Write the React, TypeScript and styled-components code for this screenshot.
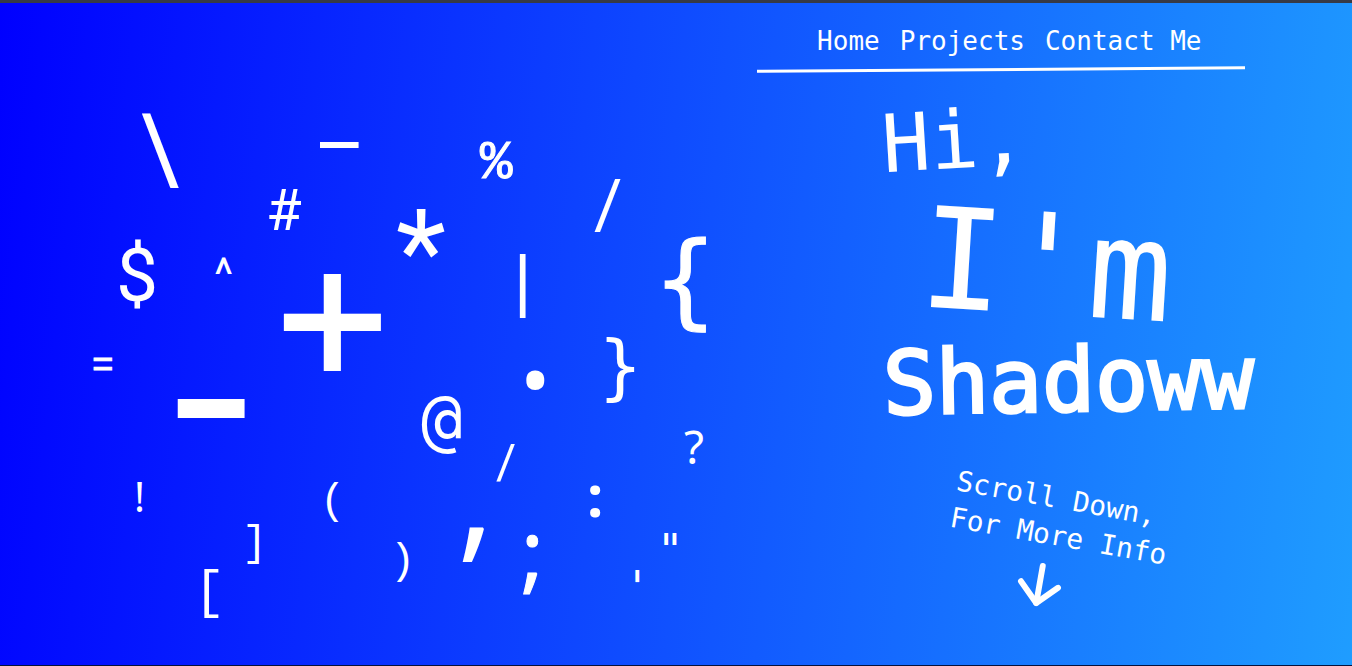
import React from 'react';
import styled, { createGlobalStyle } from 'styled-components';

const mono = '"DejaVu Sans Mono", monospace';
const courier = '"Liberation Mono", monospace';
const roboto = 'Roboto, sans-serif';
const noto = '"Noto Sans", sans-serif';

const GlobalStyle = createGlobalStyle`
  *, *::before, *::after { box-sizing: border-box; }
  body {
    margin: 0;
    color: #fff;
    font-family: ${mono};
    background: #0000ff;
  }
`;

const Page = styled.div`
  display: grid;
  grid-template-columns: 56% 1fr;
  min-height: 100vh;
  border-top: 3px solid #373a45;
  border-bottom: 1px solid #06123c;
  background: linear-gradient(96deg, #0000ff 0%, #1f9dff 100%) padding-box;
  overflow: hidden;
`;

const SymbolCanvas = styled.section`
  position: relative;
  min-height: 640px;
`;

const Glyph = styled.span<{ $x: number; $y: number; $size: number; $font: string; $bold?: boolean; $stroke?: number }>`
  position: absolute;
  left: ${p => p.$x}px;
  top: ${p => p.$y}px;
  font-family: ${p => p.$font};
  font-size: ${p => p.$size}px;
  font-weight: ${p => (p.$bold ? 700 : 400)};
  line-height: 1;
  -webkit-text-stroke: ${p => p.$stroke ?? 0}px #fff;
`;

const Intro = styled.main`
  display: flex;
  flex-direction: column;
  align-items: flex-start;
  padding-top: 23px;
`;

const Nav = styled.nav`
  display: flex;
  gap: 20px;
  padding-left: 60px;
`;

const NavLink = styled.a`
  color: inherit;
  font-size: 26px;
  line-height: 30px;
  text-decoration: none;
  white-space: nowrap;
`;

const Rule = styled.hr`
  width: 82%;
  height: 3px;
  margin: 12px 0 30px;
  border: 0;
  background: #fff;
  transform: rotate(-0.4deg);
`;

const Title = styled.h1`
  display: flex;
  flex-direction: column;
  align-items: flex-start;
  margin: 0;
  font-weight: 400;
`;

const Word = styled.span<{ $size: number; $line: number; $indent: number; $tilt: number; $gap?: number; $stroke?: number }>`
  display: block;
  margin: 0 0 ${p => p.$gap ?? 0}px ${p => p.$indent}px;
  font-size: ${p => p.$size}px;
  line-height: ${p => p.$line}px;
  white-space: nowrap;
  transform: rotate(${p => p.$tilt}deg);
  -webkit-text-stroke: ${p => p.$stroke ?? 0}px #fff;
`;

const ScrollHint = styled.p`
  margin: 54px 0 8px 195px;
  font-size: 28px;
  line-height: 37px;
  white-space: nowrap;
  transform: rotate(10deg);
`;

const Arrow = styled.svg`
  width: 43px;
  height: 43px;
  margin-left: 261px;
  overflow: visible;
  transform: rotate(10deg);
`;

type Item = { ch: string; x: number; y: number; size: number; font: string; bold?: boolean; stroke?: number };

const symbols: Item[] = [
  { ch: '\\', x: 140, y: 98, size: 96, font: roboto },
  { ch: '_', x: 320, y: 76, size: 64, font: mono, bold: true },
  { ch: '%', x: 480, y: 134, size: 54, font: courier, stroke: 1 },
  { ch: '#', x: 266, y: 178, size: 58, font: roboto },
  { ch: '/', x: 594, y: 167, size: 69, font: roboto },
  { ch: '*', x: 396, y: 191, size: 116, font: roboto },
  { ch: '$', x: 116, y: 235, size: 75, font: roboto },
  { ch: '^', x: 214, y: 249, size: 46, font: roboto },
  { ch: '+', x: 277, y: 221, size: 184, font: mono, stroke: 2 },
  { ch: '|', x: 502, y: 249, size: 69, font: courier },
  { ch: '{', x: 654, y: 225, size: 104, font: mono, stroke: 1 },
  { ch: '}', x: 599, y: 328, size: 71, font: mono },
  { ch: '.', x: 516, y: 257, size: 144, font: noto },
  { ch: '=', x: 92, y: 346, size: 36, font: courier, stroke: 1 },
  { ch: '-', x: 138, y: 283, size: 244, font: courier },
  { ch: '@', x: 421, y: 382, size: 69, font: mono },
  { ch: '/', x: 496, y: 434, size: 49, font: roboto },
  { ch: '?', x: 684, y: 420, size: 46, font: noto },
  { ch: '!', x: 134, y: 473, size: 41, font: noto },
  { ch: '(', x: 320, y: 478, size: 42, font: courier },
  { ch: ')', x: 390, y: 538, size: 42, font: courier },
  { ch: ']', x: 242, y: 520, size: 42, font: courier },
  { ch: '[', x: 194, y: 565, size: 52, font: courier },
  { ch: ',', x: 457, y: 417, size: 140, font: noto },
  { ch: ';', x: 521, y: 504, size: 86, font: noto, stroke: 1 },
  { ch: ':', x: 587, y: 463, size: 58, font: noto, bold: true },
  { ch: '"', x: 657, y: 526, size: 44, font: mono },
  { ch: "'", x: 624, y: 563, size: 44, font: mono },
];

export default function App() {
  return (
    <>
      <GlobalStyle />
      <Page>
        <SymbolCanvas>
          {symbols.map((s, i) => (
            <Glyph key={i} $x={s.x} $y={s.y} $size={s.size} $font={s.font} $bold={s.bold} $stroke={s.stroke}>
              {s.ch}
            </Glyph>
          ))}
        </SymbolCanvas>
        <Intro>
          <Nav>
            <NavLink href="#home">Home</NavLink>
            <NavLink href="#projects">Projects</NavLink>
            <NavLink href="#contact">Contact Me</NavLink>
          </Nav>
          <Rule />
          <Title>
            <Word $size={80} $line={80} $indent={125} $tilt={-3.5} $gap={16}>Hi,</Word>
            <Word $size={140} $line={138} $indent={163} $tilt={3.5}>I'm</Word>
            <Word $size={88} $line={92} $indent={126} $tilt={-1} $stroke={3}>Shadoww</Word>
          </Title>
          <ScrollHint>
            Scroll Down,
            <br />
            For More Info
          </ScrollHint>
          <Arrow
            viewBox="4 4 16 16"
            fill="none"
            stroke="#fff"
            strokeWidth="2.2"
            strokeLinecap="round"
            strokeLinejoin="round"
            aria-hidden="true"
          >
            <path d="M12 5v14" />
            <path d="m19 12-7 7-7-7" />
          </Arrow>
        </Intro>
      </Page>
    </>
  );
}
